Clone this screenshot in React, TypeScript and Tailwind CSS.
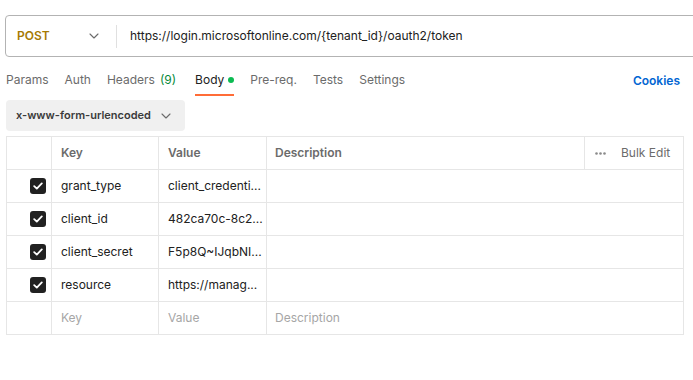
import React from 'react';

const tabs = [
  { label: 'Params' },
  { label: 'Auth' },
  { label: 'Headers', count: '(9)' },
  { label: 'Body', active: true },
  { label: 'Pre-req.' },
  { label: 'Tests' },
  { label: 'Settings' },
];

const rows = [
  { key: 'grant_type', value: 'client_credenti...' },
  { key: 'client_id', value: '482ca70c-8c2...' },
  { key: 'client_secret', value: 'F5p8Q~IJqbNI...' },
  { key: 'resource', value: 'https://manag...' },
];

function Chevron({ className = '' }: { className?: string }) {
  return (
    <svg width="10" height="6" viewBox="0 0 10 6" className={className} fill="none">
      <path d="M1 1l4 4 4-4" stroke="#6b6b6b" strokeWidth="1.1" strokeLinecap="round" strokeLinejoin="round" />
    </svg>
  );
}

function Check() {
  return (
    <div className="w-4 h-4 rounded-[3px] bg-[#212121] flex items-center justify-center">
      <svg width="10" height="8" viewBox="0 0 10 8" fill="none">
        <path d="M1.2 4.2l2.6 2.4L8.8 1.4" stroke="#fff" strokeWidth="1.8" strokeLinecap="round" strokeLinejoin="round" />
      </svg>
    </div>
  );
}

export default function App() {
  return (
    <div className="w-[693px] h-[380px] bg-white overflow-hidden font-['Inter',sans-serif] text-[12px] text-[#212121] whitespace-nowrap">
      {/* url bar */}
      <div className="ml-[5px] mt-[15px] w-[720px] h-[42px] border border-[#b3b3b3] rounded-[4px] flex items-center">
        <div className="w-[110px] flex items-center justify-between pl-[11px] pr-[17px]">
          <span className="font-semibold text-[#a67a03]">POST</span>
          <Chevron />
        </div>
        <div className="w-px h-[23px] bg-[#e0e0e0]" />
        <span className="pl-[13px]">https://login.microsoftonline.com/{'{tenant_id}'}/oauth2/token</span>
      </div>

      {/* tabs */}
      <div className="flex items-center justify-between pl-[6px] pr-[13px] mt-[9px] h-[30px]">
        <div className="flex items-stretch h-full gap-[16px]">
          {tabs.map((t) => (
            <div
              key={t.label}
              className={`flex items-center border-b-2 ${t.active ? 'border-[#ff6c37] text-[#212121]' : 'border-transparent text-[#6b6b6b]'} ${t.count ? 'mr-[3px]' : ''}`}
            >
              <span>{t.label}</span>
              {t.count && <span className="ml-[5px] text-[#078a3a]">{t.count}</span>}
              {t.active && <span className="ml-[4px] w-[6px] h-[6px] rounded-full bg-[#0cbb52]" />}
            </div>
          ))}
        </div>
        <span className="font-semibold text-[#0265d2]">Cookies</span>
      </div>

      {/* body type */}
      <div className="ml-[6px] mt-[4px] w-[179px] h-[31px] rounded-[4px] bg-[#f0f0f0] flex items-center justify-between pl-[10px] pr-[14px]">
        <span className="text-[11px] font-semibold text-[#3b3b3b]">x-www-form-urlencoded</span>
        <Chevron />
      </div>

      {/* table */}
      <div className="ml-[6px] mt-[5px] w-[678px] border border-[#e6e6e6]">
        <div className="flex h-[33px] border-b border-[#e6e6e6] text-[#6b6b6b] font-semibold">
          <div className="w-[45px] border-r border-[#e6e6e6]" />
          <div className="w-[107px] border-r border-[#e6e6e6] flex items-center pl-[9px]">Key</div>
          <div className="w-[108px] border-r border-[#e6e6e6] flex items-center pl-[9px]">Value</div>
          <div className="w-[318px] border-r border-[#e6e6e6] flex items-center pl-[8px]">Description</div>
          <div className="flex-1 flex items-center pl-[10px] font-normal">
            <svg width="11" height="3" viewBox="0 0 11 3" className="mr-[15px]">
              <circle cx="1.5" cy="1.5" r="1.3" fill="#8a8a8a" />
              <circle cx="5.5" cy="1.5" r="1.3" fill="#8a8a8a" />
              <circle cx="9.5" cy="1.5" r="1.3" fill="#8a8a8a" />
            </svg>
            <span>Bulk Edit</span>
          </div>
        </div>
        {rows.map((r) => (
          <div key={r.key} className="flex h-[33px] border-b border-[#e6e6e6]">
            <div className="w-[45px] border-r border-[#e6e6e6] flex items-center justify-end pr-[5px]">
              <Check />
            </div>
            <div className="w-[107px] border-r border-[#e6e6e6] flex items-center pl-[9px]">{r.key}</div>
            <div className="w-[108px] border-r border-[#e6e6e6] flex items-center pl-[9px]">{r.value}</div>
            <div className="flex-1" />
          </div>
        ))}
        <div className="flex h-[32px] text-[#a6a6a6]">
          <div className="w-[45px] border-r border-[#e6e6e6]" />
          <div className="w-[107px] border-r border-[#e6e6e6] flex items-center pl-[9px]">Key</div>
          <div className="w-[108px] border-r border-[#e6e6e6] flex items-center pl-[9px]">Value</div>
          <div className="flex-1 flex items-center pl-[8px]">Description</div>
        </div>
      </div>
    </div>
  );
}
